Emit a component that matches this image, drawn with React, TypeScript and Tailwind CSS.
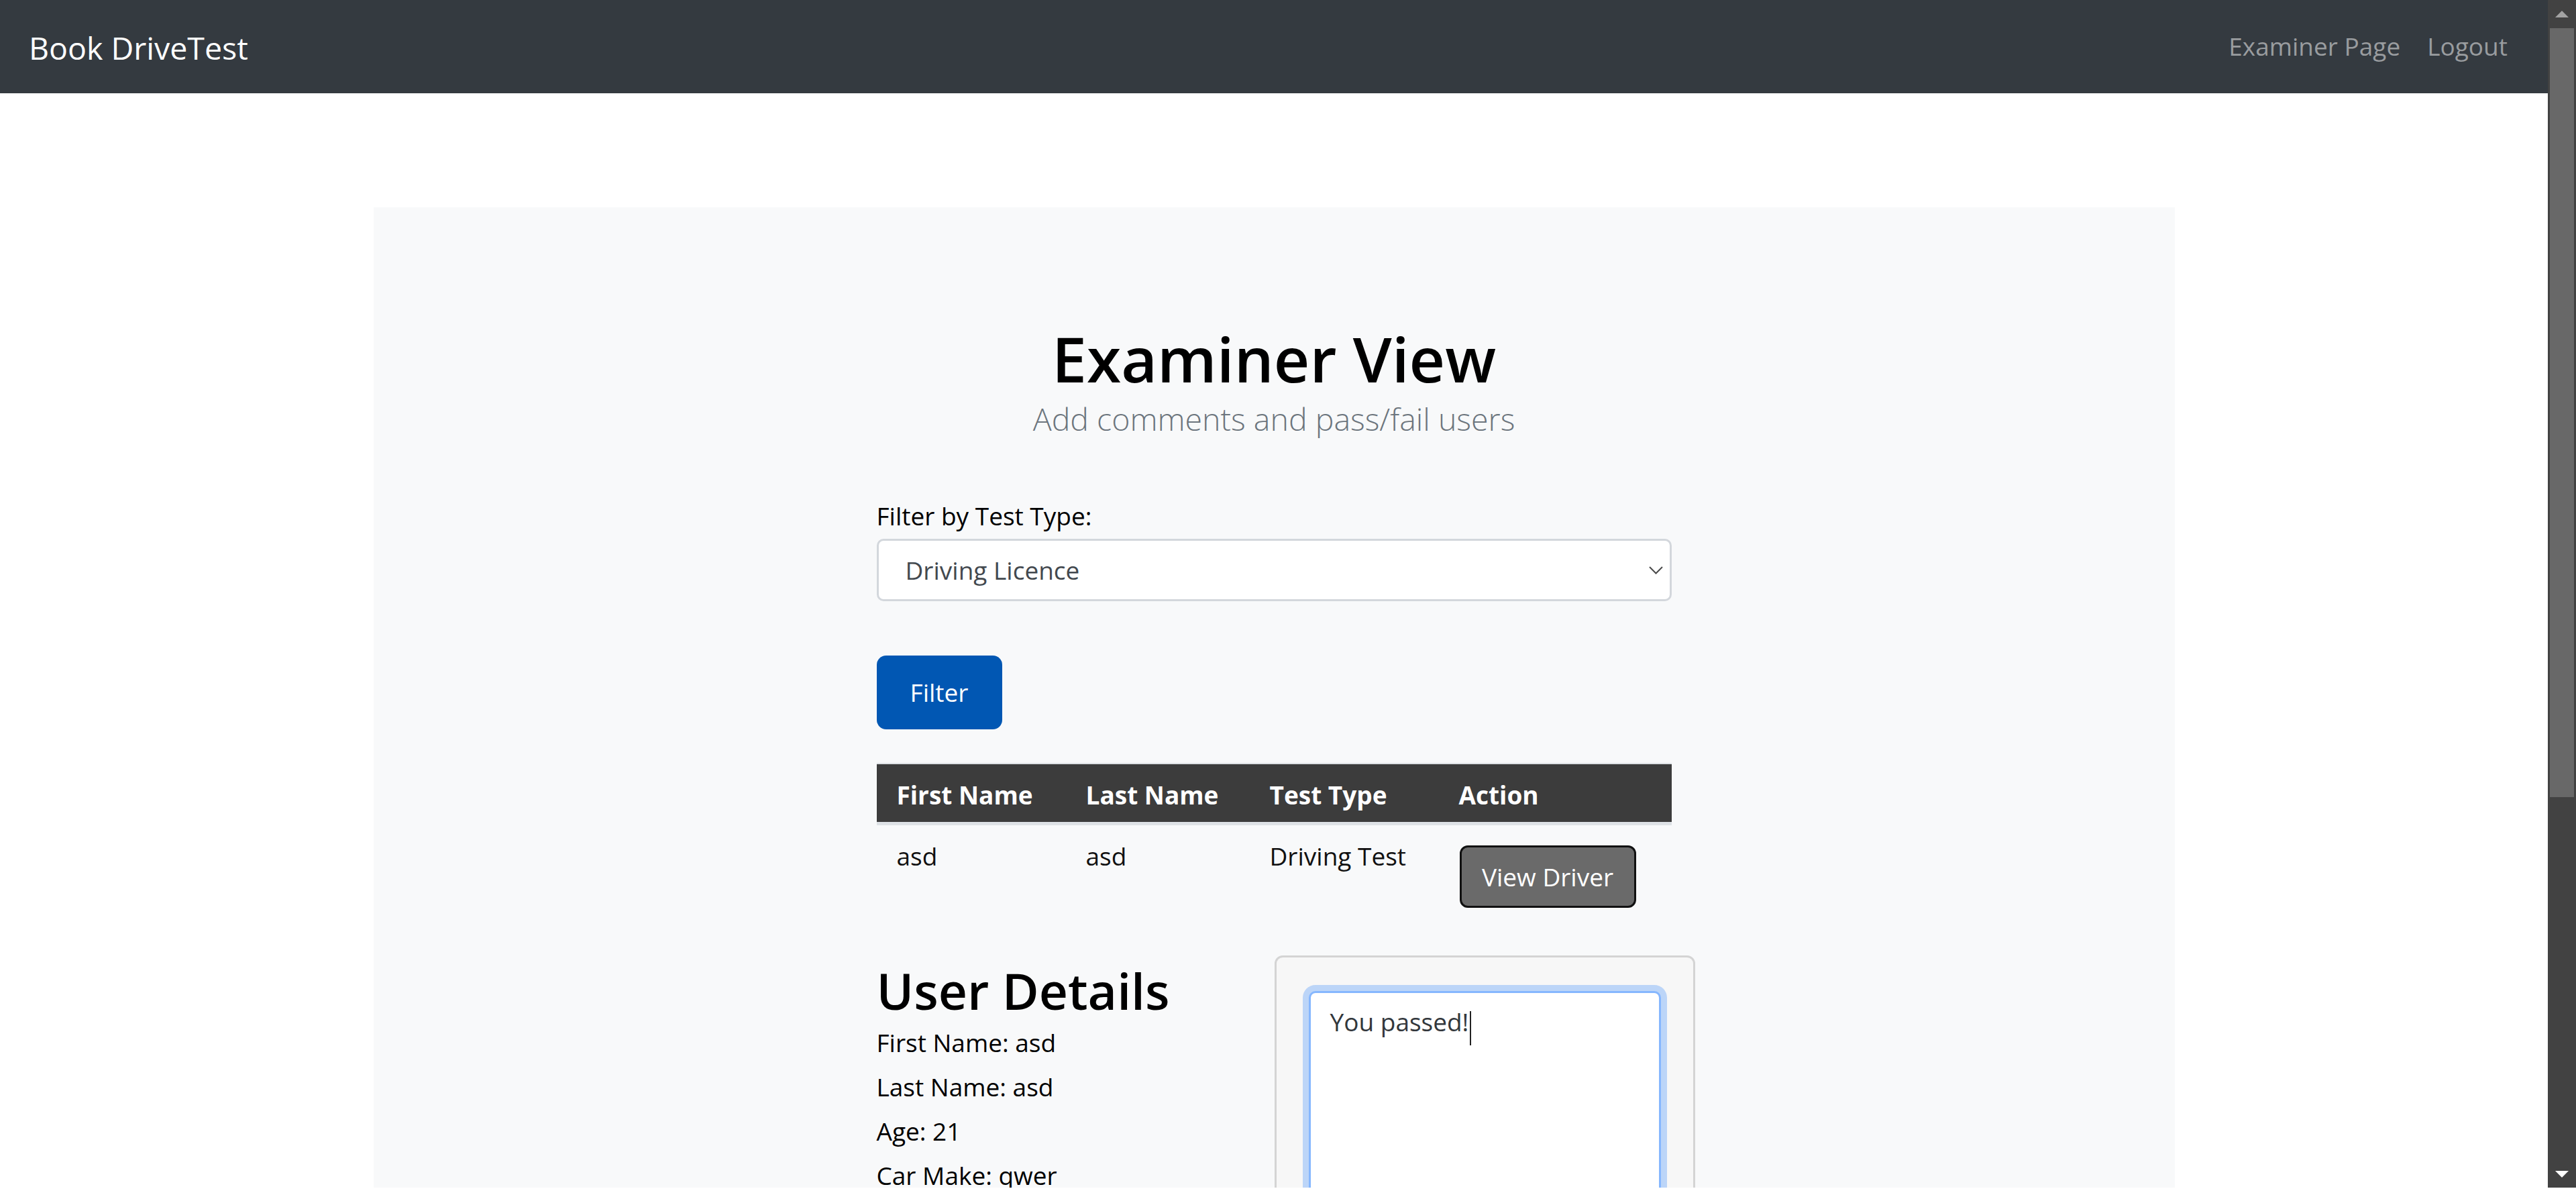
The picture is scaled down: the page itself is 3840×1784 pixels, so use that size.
import React from "react";

const rows = [{ id: 1, first: "asd", last: "asd", type: "Driving Test" }];
const details = ["First Name: asd", "Last Name: asd", "Age: 21", "Car Make: qwer"];

export default function App() {
  return (
    <div className="h-[1784px] w-[3840px] overflow-hidden bg-white font-['Open_Sans',sans-serif] text-[#212529]">
      <div className="flex h-[1770px] overflow-hidden">
        <div className="min-w-0 flex-1">
          {/* Navbar */}
          <nav className="flex h-[139px] items-start justify-between bg-[#343a40] pl-[43px] pr-[40px]">
            <a className="pt-[34px] text-[46.5px] leading-[75px] text-white">Book DriveTest</a>
            <div className="flex pt-[39px]">
              <a className="px-[20px] text-[37px] leading-[60px] text-[#999c9f]">Examiner Page</a>
              <a className="px-[20px] text-[37px] leading-[60px] text-[#999c9f]">Logout</a>
            </div>
          </nav>

          <main className="pt-[170px]">
            <div className="mx-auto min-h-[1600px] w-[2685px] bg-[#f8f9fa] pt-[165px]">
              <div className="mx-auto w-[1185px]">
                <h1 className="text-center text-[93px] font-semibold leading-[120px] text-black">Examiner View</h1>
                <p className="text-center text-[46.5px] font-light leading-[60px] text-[#6c757d]">
                  Add comments and pass/fail users
                </p>

                <label className="mt-[85px] block text-[37px] leading-[60px] text-black">Filter by Test Type:</label>
                <div className="mt-[4px] flex h-[93px] items-center justify-between rounded-[10px] border-[3px] border-[#d3d7dc] bg-white pl-[40px] pr-[10px]">
                  <span className="text-[37px] leading-[60px] text-[#43494f]">Driving Licence</span>
                  <svg width="21" height="12" viewBox="0 0 21 12" fill="none">
                    <polyline points="1,1 10.5,10.5 20,1" stroke="#4a4a4a" strokeWidth="2" />
                  </svg>
                </div>

                <button className="mt-[81px] flex h-[110px] w-[187px] items-center justify-center rounded-[14px] bg-[#0157b3] text-[37px] leading-[60px] text-white">
                  Filter
                </button>

                {/* Table */}
                <div className="mt-[50px] border-t-2 border-[#dee2e6]">
                  <div className="grid h-[91px] grid-cols-[282px_274px_282px_1fr] items-start border-b-[5px] border-[#dee2e6] bg-[#3c3c3c] pt-[16px] text-[37px] font-bold leading-[60px] text-white">
                    <div className="pl-[30px]">First Name</div>
                    <div className="pl-[30px]">Last Name</div>
                    <div className="pl-[30px]">Test Type</div>
                    <div className="pl-[30px]">Action</div>
                  </div>
                  {rows.map((row) => (
                    <div key={row.id} className="grid grid-cols-[282px_274px_282px_1fr] items-start pb-[20px] text-[37px] leading-[60px] text-[#111]">
                      <div className="pl-[30px] pt-[16px]">{row.first}</div>
                      <div className="pl-[30px] pt-[16px]">{row.last}</div>
                      <div className="pl-[30px] pt-[16px]">{row.type}</div>
                      <div className="pl-[31px] pt-[30px]">
                        <button className="flex h-[93px] w-[263px] items-center justify-center rounded-[12px] border-[3px] border-[#111] bg-[#6a6a6a] text-[37px] leading-[60px] text-white">
                          View Driver
                        </button>
                      </div>
                    </div>
                  ))}
                </div>

                {/* Details + comment */}
                <div className="mt-[51px] flex items-start">
                  <div className="w-[593px] shrink-0 pt-[7px]">
                    <h2 className="text-[75px] font-semibold leading-[90px] text-black">User Details</h2>
                    {details.map((d) => (
                      <p key={d} className="text-[37px] leading-[66px] text-black">{d}</p>
                    ))}
                  </div>
                  <div className="w-[627px] shrink-0 rounded-[12px] border-[3px] border-[#d4d4d4] bg-[#f7f7f7] pl-[48px] pt-[50px] pb-[60px]">
                    <div className="h-[600px] w-[525px] rounded-[10px] border-[3px] border-[#86b7fe] bg-white px-[29px] pt-[13px] shadow-[0_0_0_9px_rgba(13,110,253,0.25)]">
                      <span className="text-[37px] leading-[60px] text-[#32373c]">You passed!</span>
                      <span className="ml-[2px] inline-block h-[51px] w-[2px] bg-[#222] align-middle" />
                    </div>
                  </div>
                </div>
              </div>
            </div>
          </main>
        </div>

        {/* Window scrollbar */}
        <div className="flex w-[42px] shrink-0 flex-col items-center bg-[#424242] pt-[16px] pb-[15px]">
          <svg width="20" height="10" viewBox="0 0 20 10">
            <polygon points="0,10 10,0 20,10" fill="#a3a3a3" />
          </svg>
          <div className="mt-[16px] h-[1146px] w-[36px] bg-[#686868]" />
          <div className="flex-1" />
          <svg width="20" height="10" viewBox="0 0 20 10">
            <polygon points="0,0 20,0 10,10" fill="#ffffff" />
          </svg>
        </div>
      </div>
    </div>
  );
}
